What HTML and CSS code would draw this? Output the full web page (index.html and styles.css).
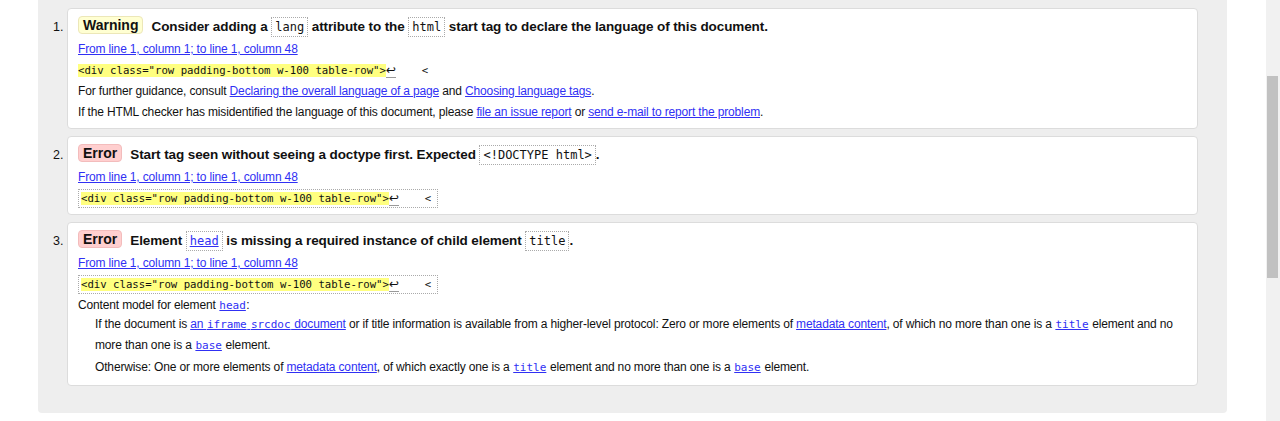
FILE: index.html
```html
<!DOCTYPE html>
<html lang="en">
<head>
<meta charset="utf-8">
<title>Validation results</title>
<link rel="stylesheet" href="styles.css">
</head>
<body>
<div class="wrap">
  <div class="panel">
    <ol class="messages">
      <li class="msg">
        <p class="head"><strong class="badge warn">Warning</strong><span class="mtext">Consider adding a <code>lang</code> attribute to the <code>html</code> start tag to declare the language of this document.</span></p>
        <p class="line"><a href="#">From line 1, column 1; to line 1, column 48</a></p>
        <p class="line extract"><code class="ex"><b class="hl">&lt;div class="row padding-bottom w-100 table-row"&gt;</b><span class="lf">↩</span>    &lt;</code></p>
        <p class="line">For further guidance, consult <a href="#">Declaring the overall language of a page</a> and <a href="#">Choosing language tags</a>.</p>
        <p class="line">If the HTML checker has misidentified the language of this document, please <a href="#">file an issue report</a> or <a href="#">send e-mail to report the problem</a>.</p>
      </li>
      <li class="msg">
        <p class="head"><strong class="badge err">Error</strong><span class="mtext">Start tag seen without seeing a doctype first. Expected <code>&lt;!DOCTYPE html&gt;</code>.</span></p>
        <p class="line"><a href="#">From line 1, column 1; to line 1, column 48</a></p>
        <p class="line extract"><code class="ex boxed"><b class="hl">&lt;div class="row padding-bottom w-100 table-row"&gt;</b><span class="lf">↩</span>    &lt;</code></p>
      </li>
      <li class="msg">
        <p class="head"><strong class="badge err">Error</strong><span class="mtext">Element <code><a href="#">head</a></code> is missing a required instance of child element <code>title</code>.</span></p>
        <p class="line"><a href="#">From line 1, column 1; to line 1, column 48</a></p>
        <p class="line extract"><code class="ex boxed"><b class="hl">&lt;div class="row padding-bottom w-100 table-row"&gt;</b><span class="lf">↩</span>    &lt;</code></p>
        <p class="line">Content model for element <a href="#" class="mono">head</a>:</p>
        <dl class="model">
          <dd>If the document is <a href="#">an <span class="mono">iframe</span> <span class="mono">srcdoc</span> document</a> or if title information is available from a higher-level protocol: Zero or more elements of <a href="#">metadata content</a>, of which no more than one is a <a href="#" class="mono">title</a> element and no more than one is a <a href="#" class="mono">base</a> element.</dd>
          <dd>Otherwise: One or more elements of <a href="#">metadata content</a>, of which exactly one is a <a href="#" class="mono">title</a> element and no more than one is a <a href="#" class="mono">base</a> element.</dd>
        </dl>
      </li>
    </ol>
  </div>
</div>
<div class="scrollbar"><div class="thumb"></div></div>
</body>
</html>
```
FILE: styles.css
```css
html, body {
  margin: 0;
  padding: 0;
  background: #fff;
}
body {
  font-family: "Liberation Sans", Arial, sans-serif;
  font-size: 12px;
  letter-spacing: -0.15px;
  color: #111;
}
.wrap {
  width: 1266px;
  padding-bottom: 9px;
}
.panel {
  margin: 0 39px 0 38px;
  background: #eeeeee;
  border-radius: 0 0 4px 4px;
}
.messages {
  margin: 0;
  padding: 8px 29px 27px 29px;
  list-style: decimal outside;
}
.msg {
  background: #fff;
  border: 1px solid #dcdcdc;
  border-radius: 4px;
  padding: 5px 10px 5px 10px;
}
.msg::marker {
  font-size: 12.5px;
  letter-spacing: 0;
}
.msg + .msg {
  margin-top: 7px;
}
.msg p {
  margin: 0;
}
.head {
  padding-top: 1px;
  line-height: 23px;
  font-size: 13.5px;
  letter-spacing: -0.1px;
  font-weight: bold;
}
.badge {
  display: inline-block;
  font-size: 14px;
  letter-spacing: 0;
  line-height: 16px;
  padding: 0 4px;
  border-radius: 4px;
  border: 1px solid transparent;
  vertical-align: 1px;
  margin-right: 8px;
}
.warn {
  background: #ffffd2;
  border-color: #ece7b8;
}
.err {
  background: #ffcfcf;
  border-color: #f3bcbc;
}
.head code {
  font-family: "DejaVu Sans Mono", monospace;
  font-weight: normal;
  font-size: 12px;
  letter-spacing: 0;
  padding: 2px 3px;
  border: 1px dotted #aaa;
}
.line {
  line-height: 21px;
}
a {
  color: #3030f4;
  text-decoration: underline;
}
.ex {
  font-family: "DejaVu Sans Mono", monospace;
  font-size: 10.66px;
  letter-spacing: 0;
  white-space: pre;
  color: #111;
}
.ex.boxed {
  display: inline-block;
  line-height: 13px;
  padding: 2px 6px 2px 2px;
  border: 1px dotted #aaa;
  vertical-align: middle;
}
.hl {
  font-weight: normal;
  background: #ffff80;
}
.lf {
  font-family: "DejaVu Sans", sans-serif;
  font-size: 12px;
  line-height: 12px;
  border-bottom: 1px solid #999;
}
.mono {
  font-family: "DejaVu Sans Mono", monospace;
  font-size: 11px;
  line-height: 1;
  letter-spacing: 0;
  margin: 0 0.5px;
}
.model {
  margin: -2px 0 2px 0;
}
.model dd {
  margin: 0 0 0 17px;
  line-height: 21px;
}
.model dd + dd {
  margin-top: 1px;
}
.scrollbar {
  position: fixed;
  top: 0;
  right: 0;
  width: 14px;
  height: 100%;
  background: #f1f1f1;
}
.thumb {
  position: absolute;
  top: 76px;
  left: 1px;
  width: 11px;
  height: 202px;
  background: #c1c1c1;
}
```
